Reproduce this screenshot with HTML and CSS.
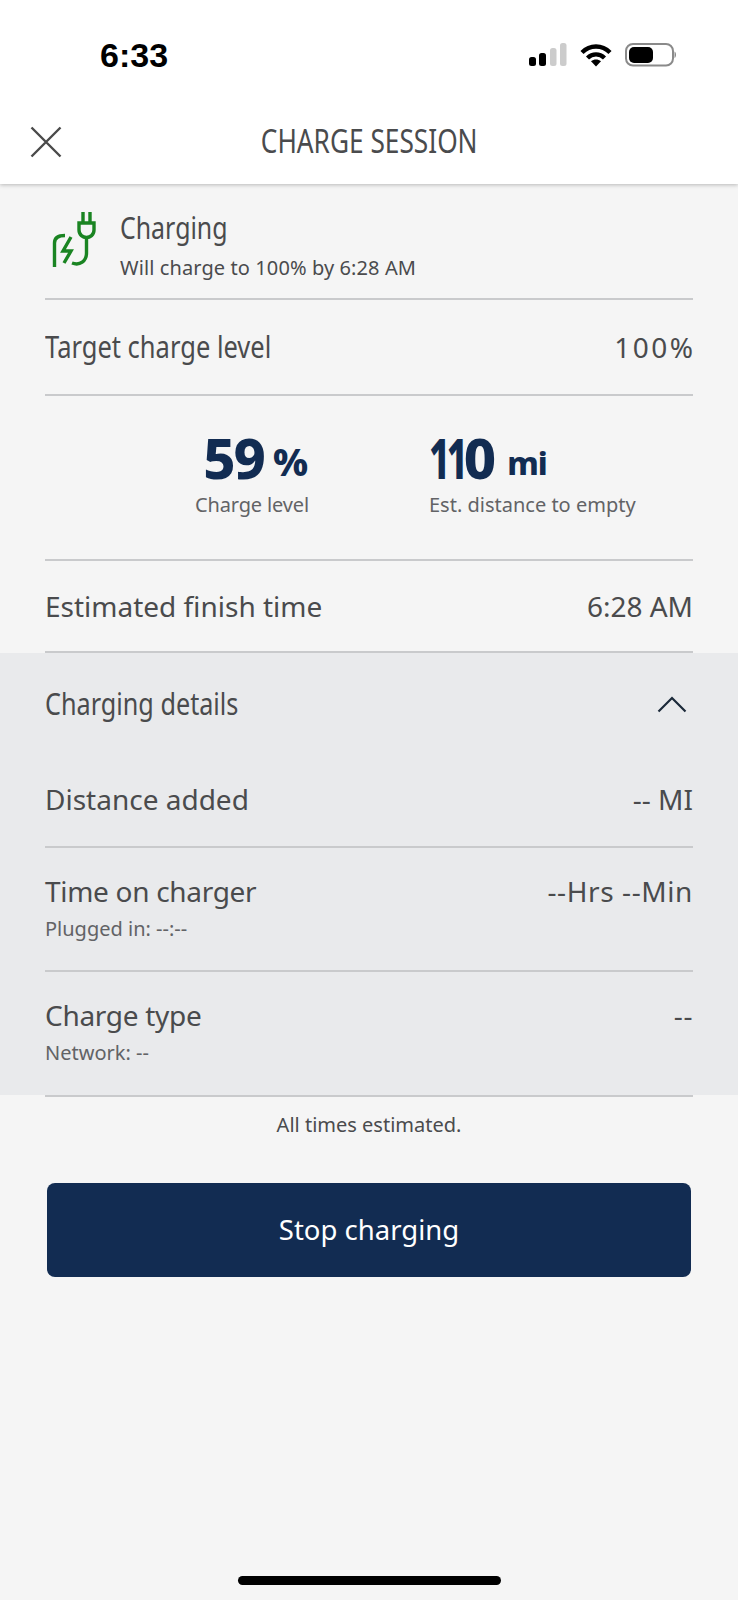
FILE: index.html
```html
<!DOCTYPE html>
<html lang="en">
<head>
    <meta charset="utf-8">
    <title>Charge Session</title>
    <link rel="stylesheet" href="styles.css">
</head>
<body>
    <div class="page">
        <!-- Barra de estado -->
        <div class="status-bar">
            <span class="clock">6:33</span>
            <div class="status-icons">
                <svg class="signal" width="38" height="24" viewBox="0 0 38 24">
                    <rect x="0" y="14" width="7" height="9" rx="2.5" fill="#000"/>
                    <rect x="10" y="10" width="7" height="13" rx="2.5" fill="#000"/>
                    <rect x="21" y="5" width="6.5" height="18" rx="2.5" fill="#ccc"/>
                    <rect x="31" y="0" width="6.5" height="23" rx="2.5" fill="#ccc"/>
                </svg>
                <svg class="wifi" width="32" height="24" viewBox="0 0 32 24">
                    <path d="M2 9.5C10 1.5 22 1.5 30 9.5" fill="none" stroke="#000" stroke-width="4.4"/>
                    <path d="M7.5 15C12.5 10.2 19.5 10.2 24.5 15" fill="none" stroke="#000" stroke-width="4.4"/>
                    <path d="M11 18.2C14 15.8 18 15.8 21 18.2L16 23.5Z" fill="#000"/>
                </svg>
                <svg class="battery" width="52" height="24" viewBox="0 0 52 24">
                    <rect x="1" y="1" width="47" height="21.5" rx="7" fill="#fff" stroke="#8a8a8a" stroke-width="2"/>
                    <rect x="4" y="4" width="24" height="16" rx="5" fill="#000"/>
                    <path d="M49.5 8.5C51.5 9.5 51.5 14 49.5 15Z" fill="#8a8a8a"/>
                </svg>
            </div>
        </div>

        <!-- Cabecera -->
        <header class="nav">
            <svg class="close" width="32" height="32" viewBox="0 0 32 32">
                <path d="M1.5 1.5L30.5 30.5M30.5 1.5L1.5 30.5" fill="none" stroke="#4a4a4a" stroke-width="2.4"/>
            </svg>
            <h1 class="nav-title">CHARGE SESSION</h1>
        </header>

        <section class="row charging-row">
            <svg class="plug" width="50" height="60" viewBox="0 0 50 60">
                <path d="M5.500 58V34C5.500 29 9 26.500 16 26.500" fill="none" stroke="#1a8422" stroke-width="3.400"/>
                <path d="M22 28L14 42H22L15 54" fill="none" stroke="#1a8422" stroke-width="3.400"/>
                <path d="M34 3V14M41 3V14" fill="none" stroke="#1a8422" stroke-width="3.400"/>
                <path d="M30 14H45V21C45 26 41 28.500 37.500 28.500C34 28.500 30 26 30 21Z" fill="none" stroke="#1a8422" stroke-width="3.400"/>
                <path d="M37.500 28.500V44C37.500 52 31 57 23 54" fill="none" stroke="#1a8422" stroke-width="3.400"/>
            </svg>
            <div>
                <div class="narrow-label charging-title">Charging</div>
                <div class="charging-sub">Will charge to 100% by 6:28 AM</div>
            </div>
        </section>

        <section class="row target-row">
            <span class="narrow-label">Target charge level</span>
            <span class="value percent">100%</span>
        </section>

        <section class="row stats-row">
            <div class="stat stat-charge">
                <div class="stat-number">59<span class="stat-unit">%</span></div>
                <div class="stat-label">Charge level</div>
            </div>
            <div class="stat stat-range">
                <div class="stat-number"><span class="ones">11</span>0<span class="stat-unit unit-mi">mi</span></div>
                <div class="stat-label">Est. distance to empty</div>
            </div>
        </section>

        <section class="row finish-row">
            <span class="label">Estimated finish time</span>
            <span class="value">6:28 AM</span>
        </section>

        <!-- Detalles de carga -->
        <div class="details">
            <div class="row details-head">
                <span class="narrow-label">Charging details</span>
                <svg class="chevron" width="30" height="18" viewBox="0 0 30 18">
                    <path d="M1.500 16.500L15 3L28.500 16.500" fill="none" stroke="#1c2a3a" stroke-width="2.200"/>
                </svg>
            </div>
            <div class="row distance-row">
                <span class="label">Distance added</span>
                <span class="value">-- MI</span>
            </div>
            <div class="row time-row">
                <div>
                    <div class="label">Time on charger</div>
                    <div class="hint">Plugged in: --:--</div>
                </div>
                <span class="value dashes">--Hrs --Min</span>
            </div>
            <div class="row type-row">
                <div>
                    <div class="label">Charge type</div>
                    <div class="hint">Network: --</div>
                </div>
                <span class="value dashes">--</span>
            </div>
        </div>
        <div class="details-end"></div>

        <p class="note">All times estimated.</p>
        <button class="stop-btn" type="button">Stop charging</button>

        <div class="home-bar"></div>
    </div>
</body>
</html>
```

FILE: styles.css
```css
/* Estilos generales */
body {
    margin: 0;
    font-family: "Noto Sans", Arial, sans-serif;
    background-color: #f5f5f5;
    color: #4a4b4d;
}

.page {
    min-height: 1600px;
    display: flex;
    flex-direction: column;
}

/* Barra de estado */
.status-bar {
    height: 100px;
    background-color: #fff;
    display: flex;
    justify-content: space-between;
    align-items: flex-start;
    padding: 0 61px 0 100px;
    box-sizing: border-box;
}

.clock {
    font-family: "Liberation Sans", Arial, sans-serif;
    font-size: 34px;
    font-weight: bold;
    color: #000;
    line-height: 36px;
    margin-top: 37px;
}

.status-icons {
    display: flex;
    align-items: flex-start;
    gap: 13px;
    margin-top: 43px;
}

/* Cabecera */
.nav {
    height: 84px;
    background-color: #fff;
    box-shadow: 0 1px 4px rgba(0, 0, 0, 0.25);
    clip-path: inset(0 0 -10px 0);
    display: flex;
    align-items: center;
    justify-content: center;
    position: relative;
}

.close {
    position: absolute;
    left: 30px;
    top: 26px;
}

.nav-title {
    margin: 0 0 4px;
    font-size: 32px;
    font-weight: normal;
    transform: scaleX(0.82);
}

/* Filas */
.row {
    margin: 0 45px;
    border-bottom: 2px solid #c9cacc;
    display: flex;
    justify-content: space-between;
    align-items: center;
    box-sizing: border-box;
}

.narrow-label {
    display: inline-block;
    font-size: 30px;
    line-height: 40px;
    transform: scaleX(0.84);
    transform-origin: left center;
}

.target-row .narrow-label {
    transform: scaleX(0.85);
}

.label,
.value {
    font-size: 28px;
    line-height: 36px;
}

.percent {
    letter-spacing: 2.5px;
    margin-right: -2.5px;
}

.dashes {
    letter-spacing: 0.6px;
}

.time-row .label,
.type-row .label {
    letter-spacing: -0.3px;
}

.hint {
    font-size: 20px;
    line-height: 26px;
    color: #626366;
    margin-top: 7px;
}

.charging-row {
    height: 116px;
    justify-content: flex-start;
    padding: 0 0 6px 4px;
    gap: 21px;
}

.plug {
    margin-top: 2px;
}

.charging-title {
    display: block;
    margin-top: 12px;
    transform: scaleX(0.83);
}

.charging-sub {
    font-size: 20px;
    line-height: 26px;
    margin-top: 7px;
    letter-spacing: 0.1px;
}

.target-row {
    height: 96px;
}

/* Datos de carga */
.stats-row {
    height: 165px;
    justify-content: flex-start;
    padding: 0 0 16px 150px;
    gap: 121px;
}

.stat-number {
    font-size: 56px;
    font-weight: 800;
    line-height: 70px;
    color: #122c52;
    letter-spacing: -2px;
}

.ones {
    display: inline-block;
    letter-spacing: -5px;
    transform: scaleX(0.65);
    transform-origin: left center;
    margin-right: -20px;
}

.stat-unit {
    font-size: 38px;
    line-height: 0;
    margin-left: 9px;
    letter-spacing: 0;
    vertical-align: 3px;
}

.unit-mi {
    font-size: 32px;
    letter-spacing: -1px;
    margin-left: 13px;
    vertical-align: 4px;
}

.stat-label {
    font-size: 20px;
    line-height: 26px;
    color: #626366;
    white-space: nowrap;
}

.stat-charge .stat-label {
    letter-spacing: -0.15px;
}

.stat-charge {
    width: 113px;
}

.stat-charge .stat-number {
    text-align: right;
}

.finish-row {
    height: 92px;
}

/* Detalles de carga */
.details {
    background-color: #e9eaec;
}

.details-head {
    height: 97px;
    border-bottom: none;
    padding: 4px 6px 0 0;
}

.distance-row {
    height: 98px;
    padding-top: 2px;
}

.time-row,
.type-row {
    height: 124px;
    align-items: flex-start;
    padding-top: 25px;
}

.type-row {
    height: 123px;
    border-bottom: none;
}

.details-end {
    margin: 0 45px;
    height: 2px;
    background-color: #c9cacc;
}

.note {
    margin: 15px 0 0;
    text-align: center;
    font-size: 20px;
    line-height: 26px;
}

.stop-btn {
    margin: 45px 47px 0;
    padding-bottom: 2px;
    height: 94px;
    background-color: #122c52;
    color: #fff;
    border: none;
    border-radius: 8px;
    font-family: "Noto Sans", sans-serif;
    font-size: 27.5px;
}

.home-bar {
    width: 263px;
    height: 9px;
    border-radius: 5px;
    background-color: #000;
    margin: auto auto 15px;
}
```
